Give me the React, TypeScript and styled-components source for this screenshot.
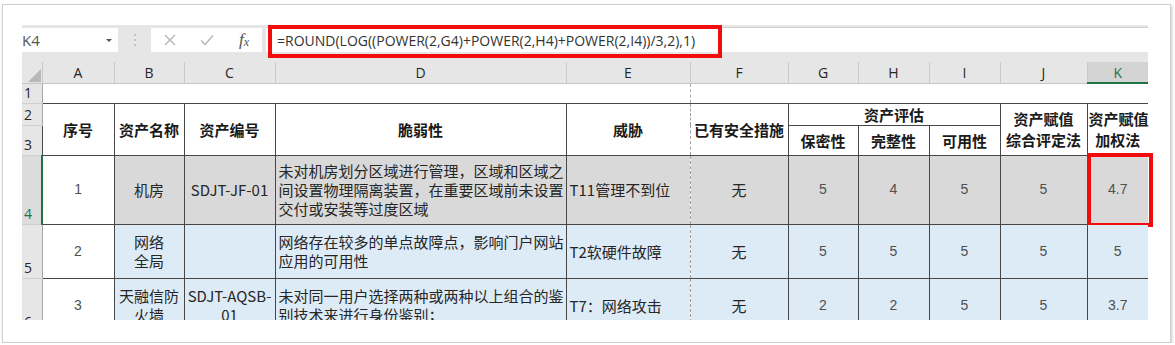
import React from 'react'
import styled, { createGlobalStyle } from 'styled-components'

const GlobalStyle = createGlobalStyle`
    html, body {
        margin: 0;
        padding: 0;
        background: #fff;
    }
    body {
        font-family: "Noto Sans CJK SC", "Noto Sans", sans-serif;
    }
`

const Frame = styled.div`
    box-sizing: border-box;
    margin: 4px 0 0 2px;
    width: 1169px;
    height: 339px;
    padding: 20px 0 0 19px;
    border: 1px solid #cfcfcf;
    box-shadow: 1px 2px 3px rgba(0,0,0,.22);
    background: #fff;
`

const Toolbar = styled.div`
    display: flex;
    width: 1126px;
    height: 37px;
    box-sizing: border-box;
    padding: 3px 0 10px;
    background: #e6e6e6;
`
const NameBox = styled.div`
    box-sizing: border-box;
    width: 96px;
    display: flex;
    align-items: center;
    justify-content: space-between;
    padding-right: 6px;
    background: #fff;
    font: 400 15px "Open Sans", sans-serif;
    color: #555;
`
const Caret = styled.span`
    width: 0;
    height: 0;
    border-left: 3px solid transparent;
    border-right: 3px solid transparent;
    border-top: 3px solid #555;
`
const Grip = styled.div`
    width: 33px;
    display: flex;
    align-items: center;
    justify-content: center;
`
const ButtonBox = styled.div`
    width: 111px;
    display: flex;
    align-items: center;
    gap: 21px;
    padding-left: 11px;
    box-sizing: border-box;
    background: #fff;
`
const IconSlot = styled.span`
    width: 16px;
    height: 16px;
    display: flex;
    align-items: center;
    justify-content: center;
`
const Fx = styled.span`
    font: italic 400 17px "Liberation Serif", serif;
    color: #505050;
    white-space: nowrap;
    sub {
        font-size: 12px;
        vertical-align: -1px;
    }
`
const FormulaInput = styled.div`
    position: relative;
    flex: 1;
    display: flex;
    align-items: center;
    margin: -1px 0 0 4px;
    padding-left: 11px;
    border-top: 1px solid #d0d0d0;
    background: #fff;
    font: 400 14px "Open Sans", sans-serif;
    color: #333;
    white-space: nowrap;

    &::after {
        content: '';
        position: absolute;
        left: 2px;
        top: -3px;
        width: 454px;
        height: 33px;
        box-sizing: border-box;
        border: 4px solid #f20c0c;
    }
`

const Sheet = styled.div`
    width: 1126px;
    height: 258px;
    overflow-x: visible;
    overflow-y: clip;
`
const Grid = styled.table`
    width: 1126px;
    table-layout: fixed;
    border-collapse: collapse;
    border-spacing: 0;
`
const Corner = styled.th`
    padding: 0;
    height: 20px;
    background: #e6e6e6;
    border-bottom: 1px solid #c4c4c4;
    vertical-align: bottom;
    text-align: right;
    svg {
        display: block;
        margin-left: auto;
    }
`
const ColHead = styled.th<{ $active?: boolean }>`
    padding: 0;
    height: 20px;
    background: ${p => p.$active ? '#d4d4d4' : '#e6e6e6'};
    color: ${p => p.$active ? '#217346' : '#262626'};
    font: 400 14px "Open Sans", sans-serif;
    text-align: center;
    border-left: 1px solid #c9c9c9;
    border-bottom: ${p => p.$active ? '2px solid #217346' : '1px solid #c4c4c4'};
`
const RowHead = styled.th<{ $active?: boolean }>`
    padding: 0 0 2px 2px;
    text-align: left;
    vertical-align: bottom;
    font: 400 14px "Open Sans", sans-serif;
    line-height: 17px;
    background: ${p => p.$active ? '#dcdcdc' : '#e6e6e6'};
    color: ${p => p.$active ? '#217346' : '#262626'};
    border-right: ${p => p.$active ? '2px solid #217346' : '1px solid #a6a6a6'};
    border-bottom: 1px solid #cfcfcf;
`
const Spacer = styled.td<{ $pageBreak?: boolean }>`
    padding: 0;
    border: none;
    border-left: ${p => p.$pageBreak ? '1px dashed #a8a8a8' : 'none'};
`

type Fill = 'white' | 'gray' | 'blue'
const fills: Record<Fill, string> = {
    white: '#ffffff',
    gray: '#d9d9d9',
    blue: '#ddebf7',
}

const Cell = styled.td<{ $fill?: Fill; $left?: boolean; $num?: boolean; $head?: boolean; $dash?: 'left' | 'right'; $last?: boolean; $marked?: boolean }>`
    position: relative;
    padding: ${p => p.$left ? '0 0 0 3px' : '0 1px'};
    background: ${p => fills[p.$fill || 'white']};
    border: 1px solid #474747;
    ${p => p.$dash === 'left' && 'border-left: 1px dashed #a0a0a0;'}
    ${p => p.$dash === 'right' && 'border-right: 1px dashed #a0a0a0;'}
    ${p => p.$last && 'border-right: none;'}
    text-align: ${p => p.$left ? 'left' : 'center'};
    vertical-align: middle;
    white-space: nowrap;
    font-family: ${p => p.$num ? '"Liberation Sans", sans-serif' : '"Noto Sans CJK SC", sans-serif'};
    font-size: ${p => p.$num ? '14px' : '15px'};
    font-weight: ${p => p.$head ? 700 : 400};
    line-height: ${p => p.$head ? '21px' : '19px'};
    color: ${p => p.$head ? '#1a1a1a' : p.$num ? '#505050' : '#262626'};

    ${p => p.$marked && `
        &::after {
            content: '';
            position: absolute;
            top: -3px;
            left: -1px;
            right: -5px;
            bottom: -3px;
            border: 4px solid #f20c0c;
        }
    `}
`

const colWidths = [20, 72, 70, 91, 291, 124, 98, 70, 71, 71, 87, 61]
const letters = ['A', 'B', 'C', 'D', 'E', 'F', 'G', 'H', 'I', 'J', 'K']

type TRow = {
    n: number
    height: number
    fill: Fill
    seq: string
    name: string[]
    code: string[]
    vuln: string[]
    threat: string
    measure: string
    scores: string[]
    active?: boolean
}

const rows: TRow[] = [
    {
        n: 4, height: 69, fill: 'gray', seq: '1', name: ['机房'], code: ['SDJT-JF-01'],
        vuln: ['未对机房划分区域进行管理，区域和区域之', '间设置物理隔离装置，在重要区域前未设置', '交付或安装等过度区域'],
        threat: 'T11管理不到位', measure: '无', scores: ['5', '4', '5', '5', '4.7'], active: true,
    },
    {
        n: 5, height: 54, fill: 'blue', seq: '2', name: ['网络', '全局'], code: [],
        vuln: ['网络存在较多的单点故障点，影响门户网站', '应用的可用性'],
        threat: 'T2软硬件故障', measure: '无', scores: ['5', '5', '5', '5', '5'],
    },
    {
        n: 6, height: 54, fill: 'blue', seq: '3', name: ['天融信防', '火墙'], code: ['SDJT-AQSB-', '01'],
        vuln: ['未对同一用户选择两种或两种以上组合的鉴', '别技术来进行身份鉴别；'],
        threat: 'T7：网络攻击', measure: '无', scores: ['2', '2', '5', '5', '3.7'],
    },
]

const Lines = ({ items }: { items: string[] }) => (
    <>
        {items.map((t, i) => (
            <React.Fragment key={i}>
                {i > 0 && <br />}
                {t}
            </React.Fragment>
        ))}
    </>
)

const App = () => {
    return (
        <>
            <GlobalStyle />
            <Frame>
                <Toolbar>
                    <NameBox>
                        <span>{'K4'}</span>
                        <Caret />
                    </NameBox>
                    <Grip>
                        <svg width="4" height="14" viewBox="0 0 4 14">
                            <circle cx="2" cy="2" r="1" fill="#b5b5b5" />
                            <circle cx="2" cy="7" r="1" fill="#b5b5b5" />
                            <circle cx="2" cy="12" r="1" fill="#b5b5b5" />
                        </svg>
                    </Grip>
                    <ButtonBox>
                        <IconSlot>
                            <svg width="14" height="14" viewBox="0 0 14 14">
                                <path d="M2 2 L12 12 M12 2 L2 12" stroke="#b3b3b3" strokeWidth="1.3" fill="none" />
                            </svg>
                        </IconSlot>
                        <IconSlot>
                            <svg width="16" height="14" viewBox="0 0 16 14">
                                <path d="M2 7.5 L6 11.5 L14 2.5" stroke="#b3b3b3" strokeWidth="1.3" fill="none" />
                            </svg>
                        </IconSlot>
                        <IconSlot>
                            <Fx>f<sub>x</sub></Fx>
                        </IconSlot>
                    </ButtonBox>
                    <FormulaInput>{'=ROUND(LOG((POWER(2,G4)+POWER(2,H4)+POWER(2,I4))/3,2),1)'}</FormulaInput>
                </Toolbar>

                <Sheet>
                    <Grid>
                        <colgroup>
                            {colWidths.map((w, i) => <col key={i} style={{ width: w }} />)}
                        </colgroup>
                        <thead>
                            <tr>
                                <Corner>
                                    <svg width="16" height="16" viewBox="0 0 16 16">
                                        <polygon points="15,2 15,15 2,15" fill="#b8b8b8" />
                                    </svg>
                                </Corner>
                                {letters.map(l => <ColHead key={l} $active={l === 'K'}>{l}</ColHead>)}
                            </tr>
                        </thead>
                        <tbody>
                            <tr style={{ height: 19 }}>
                                <RowHead>{'1'}</RowHead>
                                <Spacer colSpan={5} />
                                <Spacer colSpan={6} $pageBreak />
                            </tr>
                            <tr style={{ height: 20 }}>
                                <RowHead>{'2'}</RowHead>
                                <Cell $head rowSpan={2}>{'序号'}</Cell>
                                <Cell $head rowSpan={2}>{'资产名称'}</Cell>
                                <Cell $head rowSpan={2}>{'资产编号'}</Cell>
                                <Cell $head rowSpan={2}>{'脆弱性'}</Cell>
                                <Cell $head rowSpan={2} $dash="right">{'威胁'}</Cell>
                                <Cell $head rowSpan={2} $dash="left">{'已有安全措施'}</Cell>
                                <Cell $head colSpan={3}>{'资产评估'}</Cell>
                                <Cell $head rowSpan={2}><Lines items={['资产赋值', '综合评定法']} /></Cell>
                                <Cell $head rowSpan={2} $last><Lines items={['资产赋值', '加权法']} /></Cell>
                            </tr>
                            <tr style={{ height: 30 }}>
                                <RowHead>{'3'}</RowHead>
                                <Cell $head>{'保密性'}</Cell>
                                <Cell $head>{'完整性'}</Cell>
                                <Cell $head>{'可用性'}</Cell>
                            </tr>
                            {rows.map(r => (
                                <tr key={r.n} style={{ height: r.height }}>
                                    <RowHead $active={r.active}>{r.n}</RowHead>
                                    <Cell $num>{r.seq}</Cell>
                                    <Cell $fill={r.fill}><Lines items={r.name} /></Cell>
                                    <Cell $fill={r.fill}><Lines items={r.code} /></Cell>
                                    <Cell $fill={r.fill} $left><Lines items={r.vuln} /></Cell>
                                    <Cell $fill={r.fill} $left $dash="right">{r.threat}</Cell>
                                    <Cell $fill={r.fill} $dash="left">{r.measure}</Cell>
                                    {r.scores.map((s, i) => (
                                        <Cell
                                            key={i}
                                            $fill={r.fill}
                                            $num
                                            $last={i === r.scores.length - 1}
                                            $marked={r.active && i === r.scores.length - 1}
                                        >
                                            {s}
                                        </Cell>
                                    ))}
                                </tr>
                            ))}
                        </tbody>
                    </Grid>
                </Sheet>
            </Frame>
        </>
    )
}

export default App
